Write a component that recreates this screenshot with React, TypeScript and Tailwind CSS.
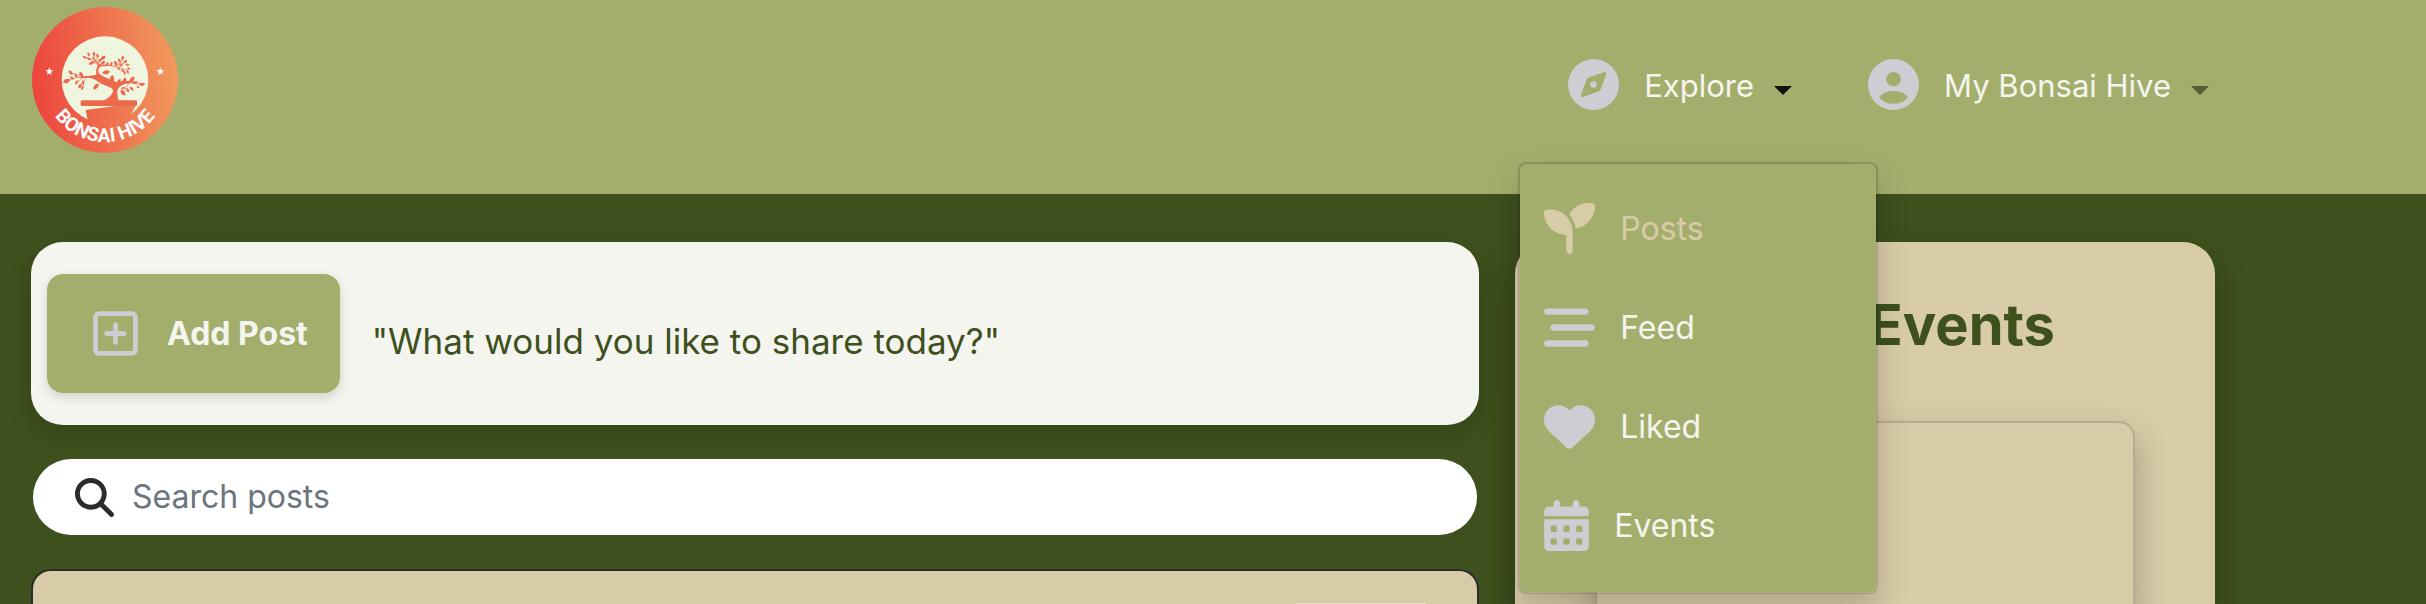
import type { ReactNode } from "react";
import {
  FaBarsStaggered,
  FaCalendarDays,
  FaHeart,
  FaMagnifyingGlass,
  FaRegSquarePlus,
  FaSeedling,
} from "react-icons/fa6";

// Leaves of the logo tree: x, y, length, rotation in degrees.
const leaves: [number, number, number, number][] = [
  [50, 153, 24, -20], [62, 128, 18, 50], [66, 144, 15, 30], [78, 137, 15, 60],
  [94, 134, 20, 60], [80, 157, 15, 120], [90, 168, 18, 120], [99, 158, 15, 80],
  [97, 174, 14, 110], [138, 170, 24, -45], [186, 148, 27, 95], [207, 154, 18, 120],
  [223, 151, 20, 120], [246, 148, 22, -45], [256, 158, 14, -30], [276, 163, 20, -5],
  [264, 171, 12, 40], [245, 176, 16, 40], [233, 180, 16, 60], [219, 188, 23, 50],
  [219, 174, 14, -30], [104, 82, 15, 30], [116, 73, 14, 60], [117, 87, 13, 20],
  [132, 72, 15, 80], [125, 99, 20, -20], [142, 77, 14, 90], [149, 92, 15, -50],
  [159, 84, 20, -40], [159, 98, 17, -30], [172, 102, 15, 110], [184, 102, 15, 110],
  [168, 127, 24, -10], [197, 100, 18, 60], [208, 92, 15, 60], [218, 84, 16, 100],
  [213, 106, 14, -20], [226, 95, 15, -40], [232, 104, 14, -10], [206, 116, 13, 30],
  [218, 122, 13, 60], [224, 129, 13, 80], [233, 126, 13, 60], [236, 116, 12, 20],
];

function Logo() {
  return (
    <svg viewBox="-54 -69 438 438" className="size-[146px]" role="img" aria-label="Bonsai Hive">
      <defs>
        <linearGradient id="ember" gradientUnits="userSpaceOnUse" x1="-54" x2="384" y1="170" y2="130">
          <stop offset="0" stopColor="#ec453c" />
          <stop offset="1" stopColor="#f19a5e" />
        </linearGradient>
        <path id="motto" d="M-21 150a186 186 0 0 0 372 0" />
      </defs>
      <circle cx="165" cy="150" r="219" fill="url(#ember)" />
      <circle cx="165" cy="149" r="130" fill="#eff5de" />
      <g fill="#ec6a4c">
        <rect x="92" y="211" width="169" height="17" rx="4" />
        <path d="M158 214c16-8 26-16 31-30l-2-8c-10-8-27-10-37-17-10-6-16-13-31-15-12-1-24 1-36 0 14-4 24-6 32-6 8-1 15-4 24-3-1-10-1-22 6-29l-20-24 4-2c7 8 12 16 20 22 12 2 24 2 38 3-9 5-26 2-36 5-9 8-8 18 1 24 14 10 34 14 49 23 14-4 24-5 34-5 14 0 26 3 38 5-18 2-40 0-56 8-12 7-16 14-15 26 0 8 3 16 5 23z" />
        {leaves.map(([x, y, length, angle]) => (
          <path
            key={`${x}-${y}`}
            d={`M${-length / 2} 0Q0 ${-length / 2} ${length / 2} 0Q0 ${length / 2} ${-length / 2} 0z`}
            transform={`translate(${x} ${y}) rotate(${angle})`}
          />
        ))}
      </g>
      <path d="M107 240l88-12h62l-20 35 12 12-84 20-50-16z" fill="url(#ember)" />
      <g fill="none" stroke="#ec6a4c" strokeWidth="2" strokeLinecap="round">
        <path d="M112 141c-20-2-34 1-60 10M100 143c-8 6-14 12-22 14M98 139L66 130M108 143c-6 6-7 18-10 28" />
        <path d="M208 162c20-4 40-4 66 1M236 161l-16 22M215 162l8-12M236 160l12-12" />
        <path d="M143 107c-10-14-20-24-40-26M133 92l-1-18M137 97l10-20M148 108c30-6 58 2 84 14M190 110c16-4 26-14 30-30M206 103l22-6" />
      </g>
      <g fill="#fff">
        <path d="M-2 112l3 8 9 1-7 5 2 9-7-5-7 5 2-9-7-5 9-1z" />
        <path d="M331 112l3 8 9 1-7 5 2 9-7-5-7 5 2-9-7-5 9-1z" />
        <text className="font-[Roboto,sans-serif] text-[58px] font-bold" textAnchor="middle">
          <textPath href="#motto" startOffset="50%">BONSAI HIVE</textPath>
        </text>
      </g>
    </svg>
  );
}

function CompassIcon() {
  return (
    <svg viewBox="-77 -77 154 154" className="size-[51px]" aria-hidden="true">
      <circle r="77" fill="#cfcdd3" />
      <path d="M34-33L-15-16-33 33 16 15z" fill="#a4ae6c" stroke="#a4ae6c" strokeWidth="10" strokeLinejoin="round" />
      <circle r="10" fill="#cfcdd3" />
    </svg>
  );
}

function AccountIcon() {
  return (
    <svg viewBox="-77 -77 154 154" className="size-[51px]" aria-hidden="true">
      <circle r="77" fill="#cfcdd3" />
      <circle cy="-16" r="22" fill="#a4ae6c" />
      <path d="M-43 39C-32 24-18 20 0 20S32 24 43 39C32 52 18 58 0 58S-32 52-43 39z" fill="#a4ae6c" />
    </svg>
  );
}

function Caret({ className }: { className: string }) {
  return (
    <svg viewBox="0 0 18 9" className={`mt-3 h-[9px] w-[18px] ${className}`} aria-hidden="true">
      <path d="M0 0h18L9 9z" fill="currentColor" />
    </svg>
  );
}

function NavButton({ icon, label, caret, open }: { icon: ReactNode; label: string; caret: string; open: boolean }) {
  return (
    <button type="button" aria-haspopup="menu" aria-expanded={open} className="flex items-center text-[31px] leading-10 text-[#f5f5ef]">
      {icon}
      <span className="mr-5 ml-[25px] pt-0.5">{label}</span>
      <Caret className={caret} />
    </button>
  );
}

const menuItems = [
  { label: "Posts", Icon: FaSeedling, text: "text-[#d8cba7]", icon: "size-[51px] text-[#d8cba7]" },
  { label: "Feed", Icon: FaBarsStaggered, text: "text-[#f5f5ef]", icon: "size-[51px] text-[#cfcdd3]" },
  { label: "Liked", Icon: FaHeart, text: "text-[#f5f5ef]", icon: "size-[51px] text-[#cfcdd3]" },
  { label: "Events", Icon: FaCalendarDays, text: "text-[#f5f5ef]", icon: "h-[51px] w-[45px] text-[#cfcdd3]" },
];

export default function App() {
  return (
    <div className="flex min-h-screen flex-col bg-[#3d501d] font-[Inter,sans-serif]">
      <header className="flex h-[194px] items-start justify-between bg-[#a4ae6c] pr-[217px] pl-8">
        <a href="#home" className="mt-[7px]">
          <Logo />
        </a>
        <nav className="mt-[59px] flex gap-[76px]">
          <div className="relative">
            <NavButton icon={<CompassIcon />} label="Explore" caret="text-[#12130d]" open />
            <ul className="absolute top-[103px] -left-[50px] z-10 flex h-[432px] w-[360px] flex-col gap-12 rounded-lg border-2 border-black/15 bg-[#a4ae6c] bg-clip-padding pt-[39px] pl-6 shadow-[0_16px_32px_rgba(0,0,0,0.18)]">
              {menuItems.map(({ label, Icon, text, icon }) => (
                <li key={label}>
                  <a href={`#${label.toLowerCase()}`} className={`flex items-center gap-[25px] text-[32px] leading-10 ${text}`}>
                    <Icon className={icon} />
                    {label}
                  </a>
                </li>
              ))}
            </ul>
          </div>
          <NavButton icon={<AccountIcon />} label="My Bonsai Hive" caret="text-[#575b38]" open={false} />
        </nav>
      </header>

      <main className="grid flex-1 grid-cols-[2.07fr_1fr] gap-9 pt-12 pr-[211px] pl-[31px]">
        <div className="flex flex-col">
          <section className="flex items-center gap-8 rounded-[32px] bg-[#f5f5ef] px-4 py-8 shadow-[0_8px_24px_rgba(0,0,0,0.15)]">
            <button type="button" className="flex h-[119px] items-center gap-[29px] rounded-2xl bg-[#a4ae6c] pr-8 pl-[46px] text-[32px] font-bold text-[#f5f5ef] shadow-[0_4px_12px_rgba(0,0,0,0.15)]">
              <FaRegSquarePlus className="h-[51px] w-[45px] text-[#cfcdd3]" />
              Add Post
            </button>
            <p className="pt-[14px] text-[35px] leading-10 text-[#3d501d]">"What would you like to share today?"</p>
          </section>

          <form role="search" className="mx-0.5 mt-[34px] flex h-[76px] items-center gap-[18px] rounded-full bg-white pr-10 pl-[42px]">
            <label htmlFor="search" aria-label="Search posts">
              <FaMagnifyingGlass className="size-[39px] text-[#2b2b2b]" />
            </label>
            <input
              id="search"
              type="search"
              placeholder="Search posts"
              className="min-w-0 flex-1 bg-transparent text-[32px] leading-10 text-[#2b2b2b] outline-none placeholder:text-[#6c757d]"
            />
          </form>

          <article className="mt-[34px] flex flex-1 items-start justify-end rounded-t-[20px] border-2 border-b-0 border-[#2b2b2b] bg-[#d8cba7] pt-8 pr-[51px]">
            <div className="h-px w-[130px] bg-[#ebe3c4]" />
          </article>
        </div>

        <aside className="flex flex-col rounded-t-[32px] bg-[#d8cba7] px-20 pt-[49px] shadow-[0_16px_32px_rgba(0,0,0,0.25)]">
          <h2 className="pr-20 text-right text-[56px] leading-[68px] font-bold text-[#3d501d]">Events</h2>
          <div className="mt-[62px] flex-1 rounded-t-2xl border-2 border-b-0 border-black/15 bg-[#d8cba7] shadow-[0_16px_32px_rgba(0,0,0,0.25)]" />
        </aside>
      </main>
    </div>
  );
}
